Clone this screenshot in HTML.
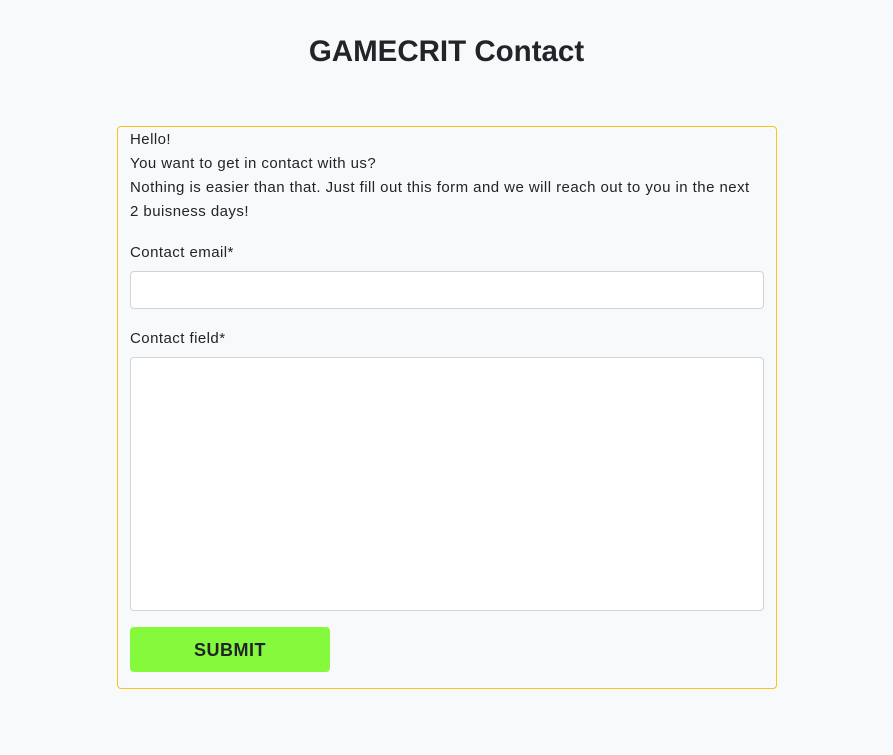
<!DOCTYPE html>
<html><head><meta charset="utf-8"><style>
*{box-sizing:border-box}
body{margin:0;background:#f8f9fa;font-family:"Liberation Sans",sans-serif;color:#212529;width:893px;height:755px;overflow:hidden}
h1{position:absolute;top:30px;left:0;width:893px;text-align:center;margin:0;font-size:29.5px;font-weight:bold;line-height:44px;color:#212529}
.card{position:absolute;left:117px;top:126px;width:660px;height:563px;border:1px solid #f5c518;border-radius:4px}
.t{position:absolute;left:12px;font-size:15px;line-height:24px;letter-spacing:0.45px}
.in{position:absolute;left:12px;width:634px;background:#fff;border:1px solid #ced4da;border-radius:4px}
.btn{position:absolute;left:12px;top:500px;width:200px;height:45px;background:#85f93c;border-radius:4px;text-align:center;line-height:47px;font-weight:bold;font-size:18px;letter-spacing:0.5px;color:#212529}
</style></head><body>
<h1>GAMECRIT Contact</h1>
<div class="card">
<div class="t" style="top:1px;width:625px">Hello!<br>You want to get in contact with us?<br>Nothing is easier than that. Just fill out this form and we will reach out to you in the next 2 buisness days!</div>
<div class="t" style="top:114px">Contact email*</div>
<div class="in" style="top:144px;height:38px"></div>
<div class="t" style="top:200px">Contact field*</div>
<div class="in" style="top:230px;height:254px"></div>
<div class="btn">SUBMIT</div>
</div>
</body></html>
